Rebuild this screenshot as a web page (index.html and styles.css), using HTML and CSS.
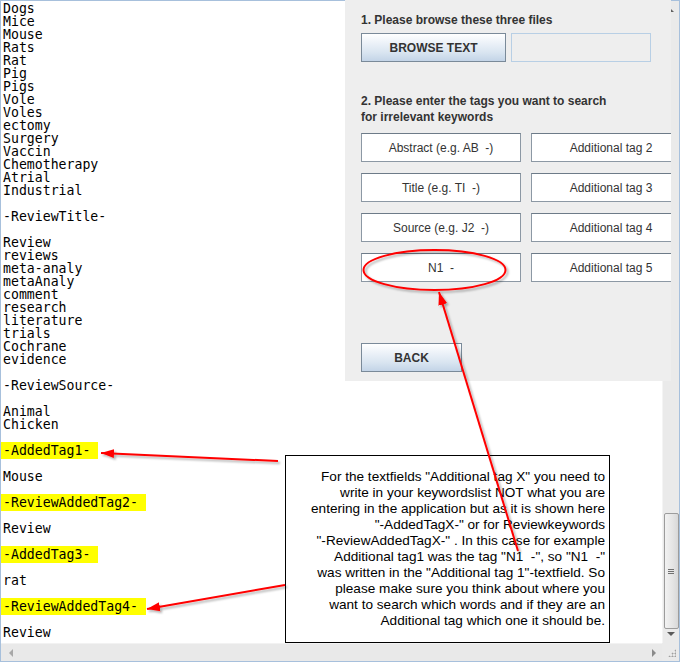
FILE: index.html
```html
<!DOCTYPE html>
<html>
<head>
<meta charset="utf-8">
<link rel="stylesheet" href="styles.css">
</head>
<body>
<div class="window">
  <div class="scrollpane">
    <div class="viewport"><pre class="keywords">Dogs
Mice
Mouse
Rats
Rat
Pig
Pigs
Vole
Voles
ectomy
Surgery
Vaccin
Chemotherapy
Atrial
Industrial

-ReviewTitle-

Review
reviews
meta-analy
metaAnaly
comment
research
literature
trials
Cochrane
evidence

-ReviewSource-

Animal
Chicken

<span class="hl">-AddedTag1-</span>

Mouse

<span class="hl">-ReviewAddedTag2-</span>

Review

<span class="hl">-AddedTag3-</span>

rat

<span class="hl">-ReviewAddedTag4-</span>

Review</pre></div>
    <div class="vbar">
      <div class="vtrack">
        <span class="arr arr-up"></span>
        <div class="thumb"><span class="grip"></span></div>
        <span class="arr arr-down"></span>
      </div>
    </div>
    <div class="hbar">
      <span class="arr arr-left"></span>
      <span class="arr arr-right"></span>
    </div>
    <div class="corner"><span class="dots"></span></div>
  </div>

  <div class="panel">
    <div class="heading">1. Please browse these three files</div>
    <div class="browse-row">
      <button class="btn btn-browse">BROWSE TEXT</button>
      <div class="path-field"></div>
    </div>
    <div class="heading heading-2">2. Please enter the tags you want to search<br>for irrelevant keywords</div>
    <div class="tag-grid">
      <div class="field">Abstract (e.g. AB&nbsp; -)</div>
      <div class="field">Additional tag 2</div>
      <div class="field">Title (e.g. TI&nbsp; -)</div>
      <div class="field">Additional tag 3</div>
      <div class="field">Source (e.g. J2&nbsp; -)</div>
      <div class="field">Additional tag 4</div>
      <div class="field">N1&nbsp; -</div>
      <div class="field">Additional tag 5</div>
    </div>
    <button class="btn btn-back">BACK</button>
  </div>

  <div class="note">For the textfields "Additional tag X" you need to<br>write in your keywordslist NOT what you are<br>entering in the application but as it is shown here<br>"-AddedTagX-" or for Reviewkeywords<br>"-ReviewAddedTagX-" . In this case for example<br>Additional tag1 was the tag "N1&nbsp; -", so "N1&nbsp; -"<br>was written in the "Additional tag 1"-textfield. So<br>please make sure you think about where you<br>want to search which words and if they are an<br>Additional tag which one it should be.</div>

  <svg class="annot" width="680" height="662" viewBox="0 0 680 662">
    <defs>
      <filter id="sh" x="-20%" y="-20%" width="140%" height="140%">
        <feDropShadow dx="2" dy="2" stdDeviation="1.2" flood-color="#000" flood-opacity="0.3"/>
      </filter>
      <marker id="head" markerUnits="userSpaceOnUse" markerWidth="14" markerHeight="10" refX="13" refY="5" orient="auto">
        <path d="M0,0.5 L13,5 L0,9.5 Z" fill="#ff0000"/>
      </marker>
    </defs>
    <g filter="url(#sh)" stroke="#ff0000" stroke-width="2" fill="none">
      <ellipse cx="434.5" cy="270" rx="71" ry="20"/>
      <line x1="518" y1="551" x2="439" y2="292" marker-end="url(#head)"/>
      <line x1="278" y1="461" x2="101" y2="453" marker-end="url(#head)"/>
      <line x1="285" y1="585" x2="147" y2="609" marker-end="url(#head)"/>
    </g>
  </svg>
</div>
</body>
</html>
```
FILE: styles.css
```css
* { box-sizing: border-box; }

html, body {
  margin: 0;
  padding: 0;
  background: #ffffff;
}

.window {
  position: relative;
  width: 680px;
  height: 662px;
  overflow: hidden;
}

.scrollpane {
  width: 680px;
  height: 662px;
  border: 1px solid #a7c0dc;
  display: grid;
  grid-template-columns: 1fr 17px;
  grid-template-rows: 1fr 18px;
}

.viewport {
  background: #ffffff;
  overflow: hidden;
}

.keywords {
  margin: 0;
  padding: 1px 0 0 2px;
  font-family: "DejaVu Sans Mono", "Liberation Mono", monospace;
  font-size: 13.2px;
  line-height: 13px;
  color: #000000;
  white-space: pre;
}

.hl {
  background: #ffff00;
  margin-left: -2px;
  padding: 1px 8px 1px 2px;
}

/* vertical scrollbar */
.vbar {
  background: #eaeaea;
  border-left: 1px solid #f4f4f4;
  display: flex;
}

.vtrack {
  flex: 1;
  display: flex;
  flex-direction: column;
  align-items: center;
  padding-top: 8px;
}

.thumb {
  margin-top: auto;
  width: 15px;
  height: 116px;
  border: 1px solid #9c9c9c;
  border-radius: 2px;
  background: linear-gradient(to right, #f2f2f2, #e4e4e4 60%, #d8d8d8);
  display: flex;
  align-items: center;
  justify-content: center;
}

.grip {
  width: 6px;
  height: 5px;
  border-top: 1px solid #707070;
  border-bottom: 1px solid #707070;
  position: relative;
}

.grip::after {
  content: "";
  position: absolute;
  left: 0;
  right: 0;
  top: 1px;
  border-top: 1px solid #707070;
}

.arr {
  width: 0;
  height: 0;
  display: block;
}

.arr-up {
  border-left: 3px solid transparent;
  border-right: 3px solid transparent;
  border-bottom: 3px solid #606060;
}

.arr-down {
  margin: 3px 0 7px;
  border-left: 4px solid transparent;
  border-right: 4px solid transparent;
  border-top: 4px solid #5a5a5a;
}

/* horizontal scrollbar */
.hbar {
  background: #e9e9e9;
  border-top: 1px solid #f2f2f2;
  display: flex;
  align-items: center;
  justify-content: space-between;
  padding: 0 6px 0 8px;
}

.arr-left {
  border-top: 4px solid transparent;
  border-bottom: 4px solid transparent;
  border-right: 4px solid #a8a8a8;
}

.arr-right {
  border-top: 4px solid transparent;
  border-bottom: 4px solid transparent;
  border-left: 4px solid #8a8a8a;
}

.corner {
  background: #eaeaea;
  display: flex;
  align-items: flex-end;
  justify-content: flex-end;
  padding: 0 3px 4px 0;
}

.dots {
  width: 8px;
  height: 8px;
  background:
    radial-gradient(circle, #a0a0a0 0.8px, transparent 1.2px) 0 0 / 3px 3px;
  clip-path: polygon(100% 0, 100% 100%, 0 100%);
}

/* panel window on top */
.panel {
  position: absolute;
  left: 345px;
  top: 0;
  width: 326px;
  height: 381px;
  background: #eeeeee;
  overflow: hidden;
  padding: 12px 0 0 16px;
  font-family: "Liberation Sans", Arial, sans-serif;
  color: #333333;
}

.heading {
  font-size: 12px;
  font-weight: bold;
  line-height: 16px;
}

.heading-2 {
  margin-top: 31px;
}

.browse-row {
  margin-top: 5px;
  display: flex;
  gap: 5px;
}

.btn {
  display: block;
  height: 29px;
  padding: 0;
  border: 1px solid #7a8a99;
  background: linear-gradient(to bottom, #ffffff 0%, #eef3f9 30%, #d8e4f0 70%, #c3d4e7 100%);
  font-family: "Liberation Sans", Arial, sans-serif;
  font-size: 12px;
  font-weight: bold;
  color: #333333;
  text-align: center;
}

.btn-browse {
  width: 145px;
}

.path-field {
  width: 140px;
  height: 29px;
  border: 1px solid #b8cfe5;
  background: #eeeeee;
}

.tag-grid {
  margin-top: 8px;
  display: grid;
  grid-template-columns: 160px 160px;
  column-gap: 10px;
  row-gap: 11px;
  width: 330px;
}

.field {
  height: 29px;
  background: #ffffff;
  border: 1px solid #8c98a4;
  border-top-color: #6d7b88;
  display: flex;
  align-items: center;
  justify-content: center;
  font-size: 12px;
  color: #333333;
  white-space: pre;
}

.btn-back {
  margin-top: 61px;
  width: 101px;
}

/* annotation callout */
.note {
  position: absolute;
  left: 285px;
  top: 455px;
  width: 325px;
  height: 188px;
  background: #ffffff;
  border: 1px solid #000000;
  padding: 13px 4px 0 0;
  text-align: right;
  font-family: "Liberation Sans", Arial, sans-serif;
  font-size: 13.6px;
  line-height: 16px;
  color: #000000;
  white-space: nowrap;
}

.annot {
  position: absolute;
  left: 0;
  top: 0;
  pointer-events: none;
}
```
